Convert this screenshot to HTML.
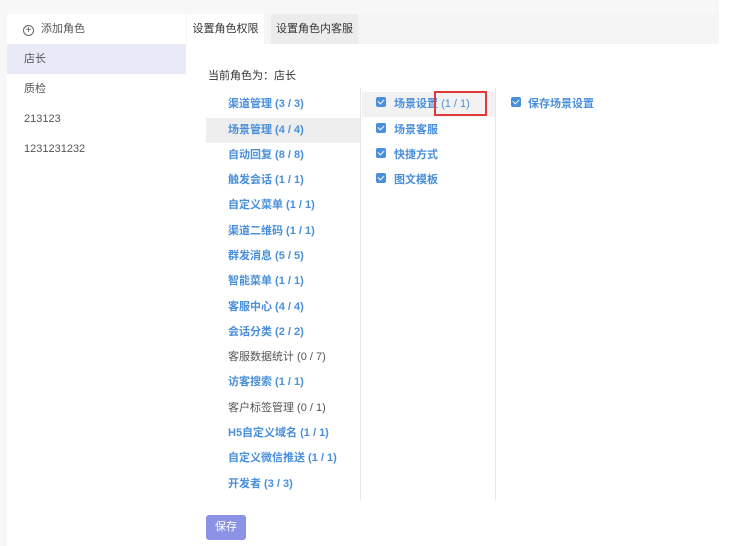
<!DOCTYPE html>
<html><head><meta charset="utf-8"><style>
*{margin:0;padding:0;box-sizing:border-box}
body{width:731px;height:546px;background:#fff;font-family:"Liberation Sans","Noto Sans CJK SC",sans-serif;font-size:11px;color:#333;position:relative;overflow:hidden}
.abs{position:absolute}
.lrow{position:absolute;left:7px;width:179px;height:30px;line-height:30px;padding-left:17px;color:#555}
.p{position:absolute;left:228px;font-weight:bold;color:#4a8fd9;line-height:14px}
.p.g{color:#555;font-weight:normal}
.cb{position:absolute;width:10px;height:10px;background:#4a8fd9;border-radius:2px}
.cb:after{content:"";position:absolute;left:3px;top:1px;width:3px;height:5px;border:solid #fff;border-width:0 1.3px 1.3px 0;transform:rotate(45deg)}
.s{position:absolute;font-weight:bold;color:#4a8fd9;line-height:14px}
</style></head><body>
<div class="abs" style="left:0;top:0;width:719px;height:14px;background:#f7f7f7"></div>
<div class="abs" style="left:0;top:0;width:7px;height:546px;background:#f7f7f7"></div>
<div class="abs" style="left:186px;top:14px;width:533px;height:30px;background:#f5f5f5"></div>
<div class="abs" style="left:187px;top:14px;width:77px;height:30px;background:#fff;line-height:30px;text-align:center;color:#333">设置角色权限</div>
<div class="abs" style="left:271px;top:14px;width:87px;height:30px;background:#ececec;line-height:30px;text-align:center;color:#333">设置角色内客服</div>
<div class="lrow" style="top:14px;padding-left:16px"><span style="display:inline-block;width:11px;height:11px;border:1px solid #666;border-radius:50%;text-align:center;line-height:9px;font-size:10px;vertical-align:-1px;margin-right:7px">+</span>添加角色</div>
<div class="lrow" style="top:44px;background:#e8eaf8">店长</div>
<div class="lrow" style="top:74px">质检</div>
<div class="lrow" style="top:104px">213123</div>
<div class="lrow" style="top:134px">1231231232</div>
<div class="abs" style="left:208px;top:67px;color:#333">当前角色为：店长</div>
<div class="abs" style="left:360px;top:88px;width:1px;height:412px;background:#e6e6e6"></div>
<div class="abs" style="left:495px;top:88px;width:1px;height:412px;background:#e6e6e6"></div>
<div class="abs" style="left:206px;top:118px;width:154px;height:25px;background:#eee"></div>
<div class="abs" style="left:362px;top:92px;width:133px;height:25px;background:#f2f2f2"></div>
<div class="p" style="top:97px">渠道管理 (3 / 3)</div>
<div class="p" style="top:123px">场景管理 (4 / 4)</div>
<div class="p" style="top:148px">自动回复 (8 / 8)</div>
<div class="p" style="top:173px">触发会话 (1 / 1)</div>
<div class="p" style="top:198px">自定义菜单 (1 / 1)</div>
<div class="p" style="top:224px">渠道二维码 (1 / 1)</div>
<div class="p" style="top:249px">群发消息 (5 / 5)</div>
<div class="p" style="top:274px">智能菜单 (1 / 1)</div>
<div class="p" style="top:300px">客服中心 (4 / 4)</div>
<div class="p" style="top:325px">会话分类 (2 / 2)</div>
<div class="p g" style="top:350px">客服数据统计 (0 / 7)</div>
<div class="p" style="top:375px">访客搜索 (1 / 1)</div>
<div class="p g" style="top:401px">客户标签管理 (0 / 1)</div>
<div class="p" style="top:426px">H5自定义域名 (1 / 1)</div>
<div class="p" style="top:451px">自定义微信推送 (1 / 1)</div>
<div class="p" style="top:477px">开发者 (3 / 3)</div>
<div class="cb" style="left:376px;top:97px"></div><div class="s" style="left:394px;top:97px">场景设置 <span style="font-weight:normal">(1 / 1)</span></div>
<div class="cb" style="left:376px;top:123px"></div><div class="s" style="left:394px;top:123px">场景客服</div>
<div class="cb" style="left:376px;top:148px"></div><div class="s" style="left:394px;top:148px">快捷方式</div>
<div class="cb" style="left:376px;top:173px"></div><div class="s" style="left:394px;top:173px">图文模板</div>
<div class="cb" style="left:511px;top:97px"></div><div class="s" style="left:528px;top:97px">保存场景设置</div>
<div class="abs" style="left:434px;top:91px;width:53px;height:25px;border:2px solid #e03a3a"></div>
<div class="abs" style="left:206px;top:515px;width:40px;height:25px;background:#8c93e6;border-radius:3px;color:#fff;text-align:center;line-height:25px">保存</div>
</body></html>
